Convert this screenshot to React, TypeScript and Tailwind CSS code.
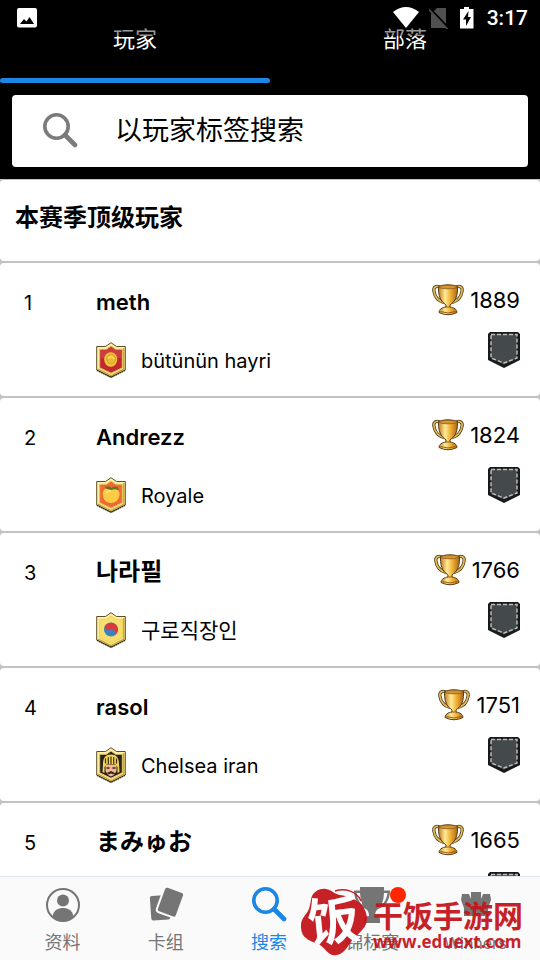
import { useState } from 'react';
import type { ReactNode } from 'react';

type BadgeKind = 'coin' | 'peach' | 'korea' | 'knight';

interface Player {
  rank: number;
  name: string;
  clan: string;
  trophies: number;
  badge: BadgeKind;
}

const players: Player[] = [
  { rank: 1, name: 'meth', clan: 'bütünün hayri', trophies: 1889, badge: 'coin' },
  { rank: 2, name: 'Andrezz', clan: 'Royale', trophies: 1824, badge: 'peach' },
  { rank: 3, name: '나라필', clan: '구로직장인', trophies: 1766, badge: 'korea' },
  { rank: 4, name: 'rasol', clan: 'Chelsea iran', trophies: 1751, badge: 'knight' },
  { rank: 5, name: 'まみゅお', clan: '', trophies: 1665, badge: 'coin' },
];

const badgeFill: Record<BadgeKind, string> = {
  coin: '#c4282f',
  peach: '#ee6a32',
  korea: '#f6df6c',
  knight: '#26221f',
};

const isCjk = (text: string) => /[\u3040-\u30ff\u4e00-\u9fff\uac00-\ud7af]/.test(text);

function ClanBadge({ kind }: { kind: BadgeKind }) {
  return (
    <svg width="30" height="36" viewBox="0 0 30 36" aria-hidden="true">
      <path d="M15 .7 20.5 4.5H29.3V28L15 35.3.7 28V4.5H9.5Z" fill="#fff0a8" stroke="#5d4f24" strokeWidth="1" />
      <path d="M2.2 27.2 15 33.6 27.8 27.2V6" fill="none" stroke="#c9a63a" strokeWidth="1.5" />
      <path d="M1 28.3 15 35.3 29 28.3" fill="none" stroke="#2e260f" strokeWidth="1.4" strokeDasharray="1.5 .8" />
      <path d="M15 4 19.5 7.3H26.3V25.8L15 31.2 3.7 25.8V7.3H10.5Z" fill={badgeFill[kind]} stroke={kind === 'korea' ? '#efcf50' : '#e2c15a'} strokeWidth="1" />
      {kind === 'coin' && (
        <>
          <path d="M4.5 7.8H10.7L15 4.6 19.3 7.8H25.5V16H4.5Z" fill="#dc5d54" opacity=".4" />
          <ellipse cx="14.7" cy="17.5" rx="6.5" ry="7.3" fill="#f3c63f" />
          <ellipse cx="15.2" cy="17" rx="4.4" ry="5" fill="#efb92c" stroke="#d09a24" strokeWidth=".9" />
          <path d="M12 16.5Q15 13 18.5 17" stroke="#f9df75" strokeWidth="1.5" fill="none" />
        </>
      )}
      {kind === 'peach' && (
        <>
          <path d="M15 12C8 10 6 14 7 19s4 7 8 7 8-3 8.5-8-4-7.5-8.5-6Z" fill="#fbcd45" />
          <path d="M10 16q2-3 5-2" stroke="#ffe57d" strokeWidth="1.5" fill="none" />
          <path d="M8.5 9.5h5l2 1.5 2-1.500 4.500.5.8 3-4-.8-3.800.8-4-1Z" fill="#5f7427" />
        </>
      )}
      {kind === 'korea' && (
        <>
          <circle cx="15" cy="17.5" r="7" fill="#3f7fbd" />
          <path d="M8.5 15a7 7 0 1 1 12 7c-1-3-3-5-5.5-4.500S10.500 18 8.500 15Z" fill="#d83a40" />
        </>
      )}
      {kind === 'knight' && (
        <>
          <path d="M9.5 18h11v6l-2.500 4-3 1.500L12 28l-2.500-4Z" fill="#efb697" />
          <path d="M7 17C7 10.500 10 7.500 15 7.500S23 10.500 23 17l.5 8-2 1v-6l-2-2.500h-9l-2 2.500v6l-2-1Z" fill="#f5d650" />
          <path d="M9.500 11.500v5M12.300 10v7M15 9.500V17M17.700 10v7M20.500 11.500v5" stroke="#3b2c12" strokeWidth="1.200" />
          <path d="M10.500 21h3M16.500 21h3" stroke="#3b211a" strokeWidth="1.3" />
          <path d="M11 26l4-2 4 2-1 1.500-3-1-3 1Z" fill="#3b211a" />
        </>
      )}
    </svg>
  );
}

function TrophyIcon() {
  return (
    <svg width="32" height="32" viewBox="0 0 32 32" aria-hidden="true">
      <defs>
        <linearGradient id="cup" x1="0" x2="1">
          <stop offset="0" stopColor="#c27a1c" />
          <stop offset=".35" stopColor="#ffeb98" />
          <stop offset=".6" stopColor="#f2b73c" />
          <stop offset="1" stopColor="#b3650f" />
        </linearGradient>
      </defs>
      <path d="M9 4C5 1 1 2.500 2 7.500c.8 5 4.500 9.500 10 11M23 4c4-3 8-1.500 7 3.500-.8 5-4.500 9.500-10 11" fill="none" stroke="#493719" strokeWidth="3.2" />
      <path d="M9 4C5 1 1 2.500 2 7.500c.8 5 4.500 9.500 10 11M23 4c4-3 8-1.500 7 3.500-.8 5-4.500 9.500-10 11" fill="none" stroke="#e3bd57" strokeWidth="1.6" />
      <path d="M6.500 2.500Q16-1 25.500 2.500 26 13 21.500 18L18 21v2c4 .5 7 2.500 7 5.500Q16 33 7 28.500c0-3 3-5 7-5.500v-2l-3.500-3Q6 13 6.500 2.500Z" fill="url(#cup)" stroke="#5a3c14" strokeWidth="1" />
      <ellipse cx="16" cy="3" rx="9" ry="1.8" fill="#d7932e" stroke="#79511a" strokeWidth=".7" />
      <path d="M8.500 27.500q7.500 3 15 0M13 23h6" stroke="#9c5c16" strokeWidth="1" fill="none" />
    </svg>
  );
}

function ArenaShield() {
  return (
    <svg width="32" height="36" viewBox="0 0 32 36" aria-hidden="true">
      <path d="M2 0H30L32 2V28L16 36 0 28V2Z" fill="#17191b" />
      <path d="M3 2H29V26.500L16 32.500 3 26.500Z" fill="#44494c" />
      <path d="M3 2.500H29V26L16 31 3 26Z" fill="none" stroke="#b9bcbc" strokeWidth="1.5" strokeDasharray="4 2" />
    </svg>
  );
}

function SearchGlyph() {
  return (
    <svg width="36" height="36" viewBox="0 0 36 36" fill="none" stroke="currentColor" aria-hidden="true">
      <circle cx="14.5" cy="13.5" r="11.7" strokeWidth="3.6" />
      <path d="M23 22 33 32" strokeWidth="4.6" strokeLinecap="round" />
    </svg>
  );
}

function StatusBar() {
  return (
    <div className="pointer-events-none absolute inset-x-0 top-0 flex h-9 items-center justify-between bg-black/40 pr-3 pl-4 text-white">
      <svg width="22" height="22" viewBox="0 0 22 22" aria-hidden="true">
        <rect x="1" y="1" width="20" height="19.5" rx="2" fill="#fff" />
        <path d="M4 17 8 12l2.500 2.500 3-4.500L18 17Z" fill="#000" />
      </svg>
      <div className="flex items-center gap-2.5">
        <svg width="26" height="22" viewBox="0 0 26 22" aria-hidden="true">
          <path d="M0 5Q13-5 26 5L13 21Z" fill="#fff" />
        </svg>
        <svg width="20" height="22" viewBox="0 0 20 22" aria-hidden="true">
          <path d="M8 1h9v20H2V7Z" fill="#505050" />
          <path d="M1 1.500 19.500 21" stroke="#000" strokeWidth="2" />
          <path d="M0 2.500 18.500 22" stroke="#505050" strokeWidth="1.6" />
        </svg>
        <svg width="18" height="22" viewBox="0 0 18 22" aria-hidden="true">
          <path d="M5 0h5v2h4.500v19.500H1V2H5Z" fill="#fff" />
          <path d="M9.500 4 4 12.500h3V19l5-9H9Z" fill="#000" />
        </svg>
        <span className="font-['Roboto',sans-serif] text-[21px] leading-9 font-medium">3:17</span>
      </div>
    </div>
  );
}

function PlayerRow({ player }: { player: Player }) {
  return (
    <li className="flex shrink-0 rounded-sm bg-white pr-5 pb-[18px] pl-6">
      <span className="w-[72px] pt-6 text-xl leading-8">{player.rank}</span>
      <div className="flex flex-1 flex-col gap-6 pt-[23px]">
        <h3 className={isCjk(player.name) ? 'text-2xl leading-8 font-semibold' : 'text-[22px] leading-8 font-semibold'}>
          {player.name}
        </h3>
        <div className="flex h-9 items-center gap-[15px]">
          <ClanBadge kind={player.badge} />
          <span className={isCjk(player.clan) ? 'pt-0.5 text-[21px] leading-8' : 'pt-0.5 text-xl leading-8'}>{player.clan}</span>
        </div>
      </div>
      <div className="flex flex-col items-end gap-4 pt-[21px]">
        <div className="flex h-8 items-center gap-1.5 text-[22px]">
          <TrophyIcon />
          <span>{player.trophies}</span>
        </div>
        <ArenaShield />
      </div>
    </li>
  );
}

const navItems: { label: string; icon: ReactNode }[] = [
  {
    label: '资料',
    icon: (
      <svg width="36" height="36" viewBox="0 0 36 36" aria-hidden="true">
        <circle cx="18" cy="18" r="16" fill="none" stroke="currentColor" strokeWidth="2" />
        <circle cx="18" cy="13.5" r="6" fill="currentColor" />
        <path d="M7.500 29C9 23 13 21 18 21s9 2 10.500 8Q24 34 18 34T7.500 29Z" fill="currentColor" />
      </svg>
    ),
  },
  {
    label: '卡组',
    icon: (
      <svg width="36" height="36" viewBox="0 0 36 36" fill="currentColor" aria-hidden="true">
        <rect x="2.5" y="8.5" width="19" height="24.5" rx="2" transform="rotate(-4 11 20)" />
        <rect x="12" y="1.5" width="21" height="27" rx="3" transform="rotate(20 22 15)" stroke="#fafafa" strokeWidth="2" />
      </svg>
    ),
  },
  { label: '搜索', icon: <SearchGlyph /> },
  {
    label: '锦标赛',
    icon: (
      <svg width="36" height="36" viewBox="0 0 36 36" fill="currentColor" aria-hidden="true">
        <path d="M6 0H30V3.500H36C36 13 31 20 24 22Q21 24 21 29q5 0 5 3v4H10v-4q0-3 5-3 0-5-3-7C5 20 0 13 0 3.500H6ZM2.500 6q1 8 6 12Q6 12 6 6ZM33.500 6H30q0 6-2.500 12 5-4 6-12Z" fillRule="evenodd" />
      </svg>
    ),
  },
  {
    label: 'Winners',
    icon: (
      <svg width="36" height="36" viewBox="0 0 36 36" fill="currentColor" aria-hidden="true">
        <path d="M5 7h7l2 5V5h10v7l2-5h7l1 6-3 8v8H7v-8l-3-8Z" />
      </svg>
    ),
  },
];

function Watermark() {
  return (
    <div className="pointer-events-none absolute right-[17px] bottom-1 flex items-center gap-1.5 text-[#c5161d] opacity-95">
      <div className="relative flex h-[68px] w-[66px] items-center justify-center">
        <svg className="absolute inset-0" width="66" height="68" viewBox="0 0 66 68" aria-hidden="true">
          <path d="M10 12C11 4 18 0 25 1c6 1 8 5 14 6 8 1 13 3 18 7 5 3 9 10 9 17 0 8-7 13-13 19-5 5-8 15-17 17-8 2-11-6-17-10C11 53 1 52 0 40c-1-8 4-12 7-17 2-4 2-7 3-11Z" fill="#c5161d" />
          <path d="M34 3c10-3 22 0 26 10" fill="none" stroke="#c5161d" strokeWidth="1.5" />
        </svg>
        <span className="relative -rotate-6 text-[52px] leading-none font-bold text-white">饭</span>
      </div>
      <div className="flex flex-col pt-2">
        <span className="text-[30px] leading-8 font-bold">干饭手游网</span>
        <span className="font-['Open_Sans',sans-serif] text-[17px] leading-5 font-bold">www.eduext.com</span>
      </div>
    </div>
  );
}

export default function App() {
  const [tab, setTab] = useState(0);
  const [activeNav, setActiveNav] = useState(2);

  return (
    <div className="relative flex h-screen flex-col overflow-hidden bg-black font-['Inter','Noto_Sans_CJK_SC',sans-serif] text-black">
      <header className="shrink-0">
        <div className="flex">
          {['玩家', '部落'].map((label, i) => (
            <button key={label} onClick={() => setTab(i)} className="flex flex-1 flex-col text-[22px] text-white">
              <span className="w-full pt-[23px] pb-[23px] leading-8">{label}</span>
              <span className={tab === i ? 'h-[5px] w-full rounded-sm bg-[#1a87e6]' : 'h-[5px] w-full'} />
            </button>
          ))}
        </div>
        <label className="mx-3 my-3 flex h-[72px] items-center gap-[37px] rounded-sm bg-white pl-[30px] text-[#7b7b7b]">
          <SearchGlyph />
          <input
            type="text"
            aria-label="以玩家标签搜索"
            placeholder="以玩家标签搜索"
            className="min-w-0 flex-1 bg-transparent text-[27px] text-black outline-none placeholder:text-black"
          />
        </label>
      </header>

      <main className="flex min-h-0 flex-1 flex-col gap-0.5 overflow-y-auto bg-[#c2c2c2] pt-px [scrollbar-width:none]">
        <h2 className="shrink-0 rounded-sm bg-white px-[15px] pt-[22px] pb-[27px] text-2xl font-bold">本赛季顶级玩家</h2>
        <ol className="flex flex-col gap-0.5">
          {players.map((player) => (
            <PlayerRow key={player.rank} player={player} />
          ))}
        </ol>
      </main>

      <nav className="flex h-[84px] shrink-0 border-t border-[#dfe6ea] bg-[#fafafa] pr-[13px] pl-[11px]">
        {navItems.map((item, i) => (
          <button
            key={item.label}
            onClick={() => setActiveNav(i)}
            className={`flex flex-1 flex-col items-center pt-2.5 ${item.label === 'Winners' ? 'text-base' : 'text-lg'} ${activeNav === i ? 'text-[#1a87e6]' : 'text-[#757575]'}`}
          >
            <span className="relative">
              <span className="block h-9">{item.icon}</span>
              {i === 3 && <span className="absolute top-0 -right-4 size-4 rounded-full bg-[#ff2600]" />}
            </span>
            <span className="pt-1.5 leading-7">{item.label}</span>
          </button>
        ))}
      </nav>

      <StatusBar />
      <Watermark />
    </div>
  );
}
